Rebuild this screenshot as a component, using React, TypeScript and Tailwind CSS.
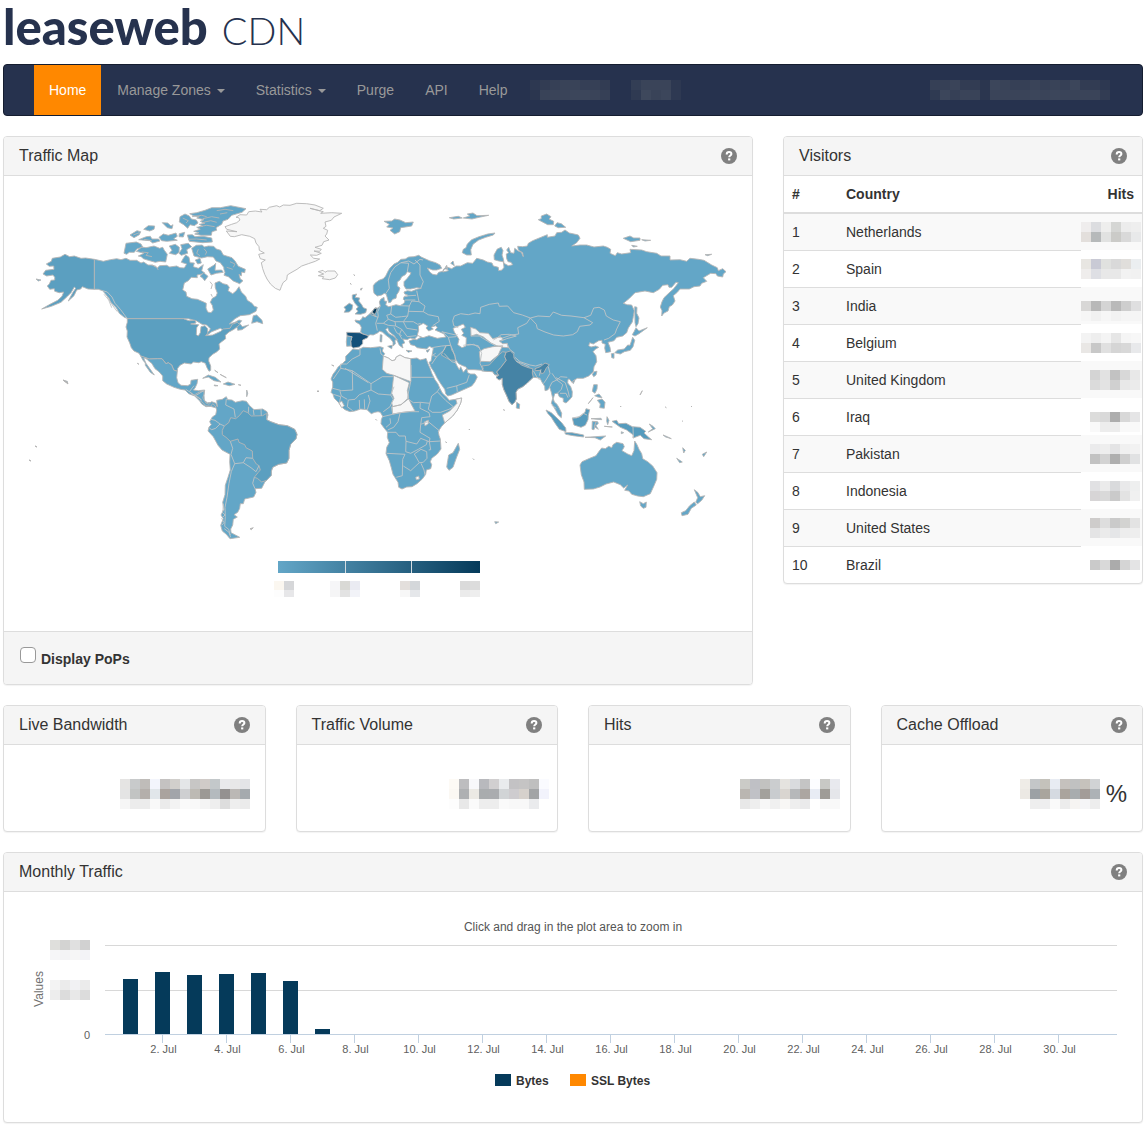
import { useId, type ReactNode } from "react";

type Frame = [number, number];
type Part = [Frame, string];

// The map is traced on a few overlapping sheets, each at three times map scale.
const NORTH_AMERICA: Frame = [20, 190];
const ATLANTIC: Frame = [200, 190];
const AFRICA: Frame = [320, 240];
const SIBERIA: Frame = [440, 190];
const PACIFIC: Frame = [480, 330];
const SOUTH_AMERICA: Frame = [190, 380];

function points(frame: Frame, list: string) {
  const n = list.trim().split(/[\s,]+/).map(Number);
  const out: string[] = [];
  for (let i = 0; i + 1 < n.length; i += 2) {
    out.push(
      `${(frame[0] + n[i] / 3).toFixed(1)} ${(frame[1] + n[i + 1] / 3).toFixed(1)}`
    );
  }
  return out.join("L");
}

function outline(...parts: Part[]) {
  return `M${parts.map(([frame, list]) => points(frame, list)).join("L")}Z`;
}

// Several shapes or lines on one sheet, separated by a slash.
function many(frame: Frame, lists: string, closed = true) {
  return lists
    .split("/")
    .map((list) => `M${points(frame, list)}${closed ? "Z" : ""}`)
    .join("");
}

const LAND = "#63a6c7";
const LAND_USED = "#5b9fc0";
const NO_DATA = "#f7f7f7";
const SEA = "#ffffff";

const eurasia = outline(
  [
    AFRICA,
    "143 287 128 281 122 276 124 262 119 253 107 246 105 240 118 242 125 237 128 230 135 233 145 225 155 216 165 203 172 205 181 198 178 186 182 178 192 172 193 183 200 184 197 195 206 200 215 198 228 194 240 197 252 190 255 182 250 178 252 170 262 169 262 164 254 162 252 156 262 152 275 154 290 148 304 145 290 143 272 147 258 147 252 137 252 125 262 115 270 104 273 98 262 95 256 104 245 110 240 120 232 126 232 138 240 144 236 155 230 164 228 175 218 178 212 187 206 188 203 178 199 163 193 160 185 165 172 168 162 160 160 148 160 137 165 130 177 121 190 116 197 108 205 92 210 84 222 72 233 67 243 58 256 57 266 51 282 50 296 46 305 52 312 55 328 62 347 68 360 75 365 85 350 90 338 90 322 84 330 97 338 103 350 105 356 97 368 94 372 86 382 88 380 76",
  ],
  [
    SIBERIA,
    "8 246 25 242 18 230 35 236 48 228 62 228 82 218 98 220 110 205 130 210 142 216 156 219 160 228 175 232 176 242 186 240 192 232 190 215 176 213 163 209 162 195 168 184 172 177 184 172 189 182 186 195 190 206 192 220 205 227 218 224 213 217 204 215 200 206 199 192 206 188 200 180 206 172 212 188 222 190 224 175 233 182 244 187 250 200 248 188 235 180 233 169 248 170 262 168 265 160 278 152 300 143 322 134 322 142 345 138 350 128 365 127 375 120 388 129 402 132 415 135 420 145 410 158 395 168 420 165 440 165 462 171 490 168 502 172 512 178 510 190 526 197 532 188 545 192 572 188 570 178 605 180 620 185 650 190 663 198 690 198 690 210 720 209 740 214 750 205 775 208 792 211 815 225 832 233 835 242 848 236 858 245 850 252 848 261 832 258 828 251 812 250 790 263 800 274 785 280 780 288 762 290 748 297 720 297 712 307 700 317 705 333 697 345 688 350 684 363 672 369 665 378 666 362 661 351 666 335 672 323 690 306 701 296 715 278 708 277 695 292 687 292 684 284 668 286 658 298 640 308 615 303 585 308 567 326 550 340 562 344 575 345 583 362 580 380 577 396 565 414 560 428 548 438 530 442 522 452 504 457 510 472 512 485 497 488 494 474 496 463 486 459 486 451 476 452 460 462 449 458 446 467 453 471 467 468 476 472 466 478 459 485 468 497 470 515 462 530 460 545 446 558 430 565 412 565 400 572 397 578 388 567",
  ],
  [
    PACIFIC,
    "264 148 263 159 272 170 277 185 276 200 268 210 258 219 250 215 250 205 238 200 233 189 224 191 220 206 223 216 231 223 238 235 245 250 244 263 235 255 227 241 219 227 214 220 218 205 214 187 209 172 203 180 195 182 194 169 187 158 180 145 172 143 160 142 151 150 141 160 128 170 113 178 108 187 109 207 104 217 96 224 87 214 80 197 71 178 67 163 67 145 57 150 48 142 56 136 44 134 38 125 15 123",
  ],
  [
    AFRICA,
    "485 391 463 389 443 389 437 380 428 377 416 371 407 359 405 366 412 379 418 389 422 380 430 397 440 385 443 398 452 402 465 402 472 411 464 427 455 438 435 447 415 456 395 465 383 468 377 461 374 448 362 431 352 415 343 397 333 382 327 367 333 364 336 347 340 325 328 319 320 327 303 325 291 323 285 317 272 314 267 303 281 298 290 299 304 291 295 285 284 297 270 294 262 299 249 297 254 309 246 313 249 324 238 316 232 303 224 288 208 275 203 263 197 269 207 281 220 288 233 299 225 300 226 312 219 318 219 306 210 295 198 286 188 277 179 273 174 278 160 285 151 284",
  ]
);

const africa = outline([
  AFRICA,
  "98 327 115 329 130 322 152 323 180 320 190 323 187 333 194 341 190 348 205 354 216 362 225 360 229 351 240 345 255 353 272 356 291 354 300 360 313 357 318 355 324 371 330 385 336 401 344 418 354 432 359 444 367 459 382 473 387 481 407 478 425 474 422 489 412 510 398 528 374 549 365 559 355 574 357 586 361 597 362 612 363 627 352 642 335 655 331 665 335 674 332 686 319 690 317 703 307 717 291 731 276 740 260 741 246 747 236 742 234 727 219 703 214 683 208 662 198 641 200 622 208 608 202 592 203 577 193 565 183 551 184 539 188 529 181 517 174 515 164 517 154 521 141 509 122 507 104 513 90 515 75 509 65 501 57 489 43 475 39 463 33 457 38 441 38 426 33 417 39 403 47 392 55 380 66 372 77 361 77 349 87 339",
]);

const namerica = outline([
  NORTH_AMERICA,
  "223 208 250 214 271 209 290 206 303 209 318 205 330 211 350 211 363 219 371 216 384 225 398 225 412 234 419 227 440 226 449 231 470 228 480 233 493 234 500 222 484 217 488 208 497 195 507 202 510 218 523 219 520 230 535 235 550 224 545 242 554 249 543 253 531 255 532 263 514 262 505 272 493 279 488 300 498 306 500 319 516 326 532 328 549 335 559 340 558 354 563 366 573 368 580 360 577 346 571 337 577 325 588 319 592 309 586 293 585 279 598 274 609 281 622 284 628 292 624 302 638 311 648 303 657 290 664 306 677 319 682 331 696 340 703 349 712 352 708 364 688 374 661 377 645 386 628 402 645 397 657 390 665 392 659 400 667 410 686 405 666 419 653 421 651 412 637 414 631 423 618 426 601 415 575 425 558 438 555 432 568 423 571 416 560 405 546 403 530 393 505 386 325 386 313 382 298 370 289 353 272 337 267 325 248 302 235 298 223 298",
]);

const usa = outline([
  NORTH_AMERICA,
  "322 386 490 386 507 392 525 391 528 399 512 402 536 404 530 413 529 434 535 438 541 428 543 410 555 407 563 416 563 429 557 437 578 435 602 424 610 417 630 415 637 403 652 397 659 404 642 418 627 426 616 436 617 446 604 456 597 462 599 477 591 485 578 493 567 503 566 513 572 528 572 541 567 544 561 533 556 520 544 515 536 518 520 516 514 522 493 519 480 526 473 535 472 544 461 540 455 525 445 518 438 521 426 506 413 506 388 507 362 498 357 490 342 483 334 473 329 459 321 441 322 423 318 411 322 397",
]);

const alaska = outline([
  NORTH_AMERICA,
  "223 208 197 204 183 205 163 198 149 200 135 193 121 201 97 205 94 214 79 222 88 229 101 228 102 238 77 241 69 252 80 258 99 255 104 262 104 270 93 271 88 282 82 288 89 298 103 296 104 304 118 308 131 306 126 319 113 331 90 343 65 357 94 349 123 337 141 320 153 308 163 291 167 295 158 308 145 333 162 317 170 300 182 297 187 290 204 297 223 298",
]);

const mexico = outline([
  NORTH_AMERICA,
  "362 498 388 507 413 506 426 506 438 521 445 518 455 525 461 540 472 544 470 563 474 578 483 586 503 587 512 582 513 571 533 568 531 581 525 594 520 600 535 602 554 600 552 615 553 631 562 638 577 637 590 645 586 653 571 649 558 650 545 642 540 634 524 618 506 611 495 600 481 598 462 592 440 582 428 572 428 558 417 545 405 536 395 520 385 512 378 504 371 505 378 520 388 534 403 555 391 547 382 534 376 526 376 519 369 511",
]);

const arctic = many(
  NORTH_AMERICA,
  "312 190 318 160 349 156 363 162 368 171 350 177 343 187 328 187 320 193/349 184 365 171 378 173 402 168 419 175 428 172 433 181 442 193 437 216 420 214 406 217 385 211 370 206 364 200 355 198 372 190/330 135 351 122 362 125 358 134 342 143/356 149 379 140 391 139 396 147 416 147 420 153 398 159 389 152/371 118 385 107 404 108 402 118 389 123/417 142 430 132 445 136 468 129 472 139 461 146 472 151 440 154 425 152/427 98 443 99 453 108 459 104 456 116 442 113/448 168 466 163 478 172 477 187 467 194 448 190 456 181/482 164 505 160 515 170 500 179 503 190 484 196 477 190 486 176/480 80 495 72 508 78 514 87 529 90 534 99 523 107 510 104 503 115 491 104 478 96/509 71 530 68 555 61 575 53 601 53 632 47 678 56 666 67 635 76 624 88 609 93 605 103 588 113 590 121 576 125 574 136 543 136 524 132 537 128 521 124 541 118 530 112 548 109 538 103 555 100 541 94 552 89 530 84 538 80 520 77/502 135 517 134 525 140 550 139 575 144 577 156 548 158 508 154/478 131 494 127 490 141 477 140/515 175 529 166 547 165 553 171 565 168 581 169 589 177 602 181 610 195 636 203 645 213 655 229 676 238 674 248 665 246 664 258 657 253 661 267 669 272 659 281 640 273 625 260 612 256 615 247 612 239 611 232 601 218 588 213 580 201 562 200 545 204 522 198/526 210 540 205 544 219 533 222/563 237 581 226 587 220 585 241 605 240 610 247 589 250 573 255/540 259 551 248 564 259 554 272 547 263/700 377 710 375 726 391 728 401 711 395 695 400/130 571 142 574 143 580/48 267 63 270 55 273/380 508 377 503 383 500"
);

// Fjords and straits cut into the islands and the north coast.
const inlets = many(
  NORTH_AMERICA,
  "516 80 545 76 560 80/548 86 575 80 598 84/545 98 572 92 590 97/538 110 560 106 584 110/590 62 615 58 640 62/600 72 622 68/505 148 530 147 560 150/365 186 385 188 378 196 396 200/535 178 530 190 540 197/552 176 560 186 556 194/395 226 408 229 415 240/340 135 358 128/372 148 395 152/488 84 505 92 498 99/630 215 645 222 640 232/620 232 638 238/570 275 577 284 573 297/573 312 577 320",
  false
);

const caribbean = many(
  NORTH_AMERICA,
  "548 565 565 555 586 562 603 576 582 572 565 561/610 582 624 576 645 583 628 587/582 585 594 587 584 588/584 541 594 548/600 553 619 563/655 584 663 586/680 600 683 610 680 620/352 520 357 523"
);

const samerica = outline([
  SOUTH_AMERICA,
  "0 36 12 45 30 35 42 33 42 42 38 54 48 69 57 73 65 65 78 70 82 80 80 61 97 58 109 50 113 59 126 60 136 67 157 62 169 64 179 77 192 89 218 87 231 95 234 105 230 119 242 125 267 134 292 137 314 148 321 163 318 176 302 193 297 211 297 235 290 249 266 253 248 262 244 274 244 286 224 307 215 325 195 326 198 337 191 351 164 357 160 371 151 371 149 385 143 397 132 404 142 411 130 418 128 435 122 447 123 458 149 472 120 476 109 463 97 453 92 436 100 416 93 405 102 388 98 367 105 344 106 316 114 292 121 270 119 246 120 223 96 210 84 196 70 170 54 153 57 141 64 134 59 125 67 111 77 104 80 90 76 78 68 71 62 79 48 77 35 65 28 53 10 45",
]);

const brazil = outline([
  SOUTH_AMERICA,
  "103 138 116 128 122 113 137 116 148 107 160 92 173 98 184 108 218 107 230 100 230 119 242 125 267 134 292 137 314 148 321 163 318 176 302 193 297 211 297 235 290 249 266 253 248 262 244 274 244 286 230 301 215 306 202 295 193 292 205 277 211 270 207 257 199 252 188 235 187 213 168 203 164 194 147 187 144 177 121 184 108 172 97 164 97 151",
]);

const southLines = many(
  SOUTH_AMERICA,
  "62 118 75 121 90 132 103 138/90 132 77 145 65 149 58 144/109 57 107 75 132 87 136 112/176 80 175 98/190 90 192 105/213 87 214 107/121 184 128 205 123 223 134 251 160 248 168 233 188 235/160 248 183 263 198 275 207 257/134 251 124 275 117 310 111 352 105 382 106 410 104 439 116 448 121 465/193 292 188 310 195 326/103 446 117 457 122 472/100 371 99 388 97 397 105 405 95 415 102 428 95 436",
  false
);

const greenland = outline([
  ATLANTIC,
  "75 110 95 103 110 98 120 90 116 83 108 82 120 74 140 75 146 65 166 63 186 66 180 58 200 59 208 52 230 47 239 51 250 45 270 46 290 40 320 41 345 45 370 55 359 62 330 55 370 65 362 70 395 68 425 70 402 81 394 91 375 96 378 109 370 115 383 121 380 132 375 138 387 150 371 155 366 166 345 172 364 178 359 184 342 183 364 190 350 196 331 195 341 205 359 207 346 214 325 221 305 228 291 238 273 248 262 255 260 269 249 278 244 290 240 301 226 295 212 283 201 267 194 253 188 236 184 218 196 210 181 206 176 193 193 189 178 181 177 170 168 159 164 146 149 139 125 134 103 140 91 139 79 123 111 125 80 118",
]);

const iceland = outline([
  ATLANTIC,
  "355 245 369 241 375 247 382 243 405 243 413 254 406 264 389 269 367 266 371 260 355 257 371 252",
]);

const britain = many(
  AFRICA,
  "97 165 110 162 105 172 119 174 116 183 125 194 130 203 140 207 137 218 122 223 105 222 114 214 108 207 115 201 105 190 100 181 97 175/77 198 88 190 98 195 96 208 88 216 73 217 77 208 72 202/121 147 127 144 123 151/90 130 94 133/181 284 186 285 185 306 180 305/203 319 217 316 215 326/258 331 276 333 265 337/318 332 329 328 323 337/101 104 105 107"
);

const islands = many(
  AFRICA,
  "415 610 419 628 409 654 399 682 387 691 380 681 383 662 386 645 399 638/590 487 599 493 598 506 589 504/35 375 42 378/447 567 449 570/459 656 462 659/377 605 380 609/167 538 170 541"
);

const polar = many(
  SIBERIA,
  "80 195 67 188 70 178 78 173 82 162 95 149 117 140 143 132 165 129 160 135 137 142 116 150 99 163 92 179 94 195/28 83 55 79 67 84 41 87/70 84 89 78 82 72 99 69 111 77 146 76 117 82 96 87/304 78 320 72 333 80 327 87 341 94 340 104 323 104 306 95 295 89 304 86/344 108 351 98 364 101 377 112 355 113/550 145 570 138 581 144 600 144 600 151 572 155/605 149 632 151 615 153/575 166 592 169 580 171/795 194 815 193 803 197/584 350 591 352 590 370 597 384 594 401 588 410 585 398/583 424 588 413 597 423 622 413 597 431 585 438 577 434/578 442 584 451 579 470 571 481 553 485 541 492 524 488 533 480 553 477 563 465 570 466/514 491 522 490 522 505 515 503/463 545 471 544 468 555 461 560 457 553/39 213 32 220 43 227/398 573 405 570 400 581"
);

const svalbard = many(
  ATLANTIC,
  "552 94 575 93 584 87 600 90 617 98 640 96 635 108 602 113 599 125 584 132 570 121 579 114 560 111 568 103"
);

const eastIslands = many(
  PACIFIC,
  "341 164 352 164 351 177 345 190 337 184/344 197 357 192 366 203 353 201/352 211 366 207 375 217 373 235 359 233 361 222/325 221 339 203/333 266 363 265 365 269/349 273 343 290 355 298 348 287 355 280 353 275 337 274 336 298 342 299/381 260 387 271 383 284 380 274/373 289 397 291/424 305 431 308 424 311/315 322 345 320 377 318 361 330 345 323/508 282 519 289 526 296 505 306 518 296/549 315 562 320 574 326 557 321/608 353 616 361 611 369/590 385 607 396 599 398/667 373 680 366 671 380/480 195 487 182/556 231 559 233/606 272 608 274/44 575 56 576 47 581/70 239 74 241/421 228 423 231"
);

const australia = many(
  PACIFIC,
  "300 405 306 395 329 385 348 377 358 363 365 354 376 356 386 349 395 353 399 344 410 337 429 341 433 350 426 362 443 372 455 377 462 362 464 333 471 344 477 358 485 371 488 386 503 395 518 408 531 428 530 448 522 467 511 491 490 500 473 498 455 493 447 483 434 481 443 465 431 474 421 464 401 456 378 462 360 471 340 477 313 478 312 456 304 434/479 515 490 521 499 516 498 532 490 535 482 528/643 479 653 487 661 500 674 497 665 511 653 521 647 517 653 503/643 516 649 525 634 535 624 553 606 557 604 548 617 542 629 527"
);

const indonesia = many(
  PACIFIC,
  "198 240 214 248 231 264 245 278 257 294 258 305 238 298 224 278 214 262 203 250/254 308 276 308 311 315 311 321 280 317 257 313/277 264 289 264 302 259 315 247 318 236 329 239 325 256 324 269 316 286 303 292 282 285/396 274 410 271 416 281 438 280 457 290 480 292 497 304 492 309 506 322 515 329 492 326 481 316 459 324 460 315 440 300 421 292"
);

const india = many(
  PACIFIC,
  "78 67 91 63 101 72 102 84 109 94 126 106 145 113 158 116 157 129 160 142 151 150 141 160 128 170 113 178 108 187 109 207 104 217 96 224 87 214 80 197 71 178 67 163 67 145 57 150 48 142 56 136 50 126 63 112 79 91 74 80/165 116 181 110 195 99 208 104 199 114 191 129 184 131 181 121 166 122"
);

const pakistan = outline([
  PACIFIC,
  "6 108 28 105 42 90 55 76 68 65 78 67 74 80 79 91 63 112 50 126 56 136 44 134 38 125 5 123 10 115",
]);

const africaLines = many(
  AFRICA,
  "120 325 120 345 97 357 80 372 62 372 62 385 40 417/62 385 97 392 98 450 65 452 38 445/97 392 153 431 187 410 221 410/75 385 145 428/180 325 183 342 194 350/153 431 153 450 118 464 105 478 85 480 82 500 98 512/153 450 175 462 212 465 222 440/145 465 150 483 142 509/118 480 119 509/133 478 134 508/60 453 64 468 82 478/40 463 62 470 58 490/212 465 220 478 210 500 190 515/215 500 218 523 188 530/218 523 239 518 268 515 297 515/273 375 273 412 340 412/272 425 262 475 280 488 301 487 329 490 335 468 352 455 359 444/329 490 325 508 337 517 362 517 387 508 400 500 378 482 352 455/301 487 300 505 327 518 330 530 305 533 302 553 325 545 360 574/240 520 234 545 221 562 203 570/210 535 212 550 198 562/203 577 228 577 237 588 256 588 258 604 290 612 302 595 328 605 330 595 300 577 302 553/258 604 257 635 272 640 295 628 319 614 322 603/200 640 255 643 248 658 247 707 229 712/250 678 272 692 298 668 283 642/283 642 303 628 320 635 321 655 310 667 298 668/303 670 312 690 315 705/328 605 332 629 326 630/328 605 362 603",
  false
);

const europeLines = many(
  AFRICA,
  "197 161 208 145 205 120 212 98 225 80 243 68 266 70 262 95/243 68 266 63 282 72 300 58 309 60/285 60 300 75 300 105 310 125 302 145/181 198 173 215 175 228 167 250 172 272/215 198 212 222 227 232 245 230 263 228 268 198 240 197/268 198 275 183 297 185 315 198 310 215 265 214/297 185 290 152/255 180 286 180/254 168 288 166/310 215 325 224 355 230 358 244 338 257/263 228 250 245 225 245 205 238 200 226 212 222/205 238 190 250 170 250/225 245 227 258 205 256 190 250/250 245 260 265 292 270/227 258 245 268 262 290 289 287/245 268 238 284 247 298/222 262 230 278 245 287/155 217 163 228 175 232/250 245 280 245 293 253 302 250/335 323 365 318 392 316 385 292 367 275/385 292 408 290 412 283/365 275 390 281 408 285/340 347 350 350 372 330 378 317/350 350 335 372/372 340 395 365 410 369/392 316 398 330 405 350 408 361/380 445 408 438 440 427 448 404/410 438 412 455/335 347 347 340/430 316 450 313 475 317 485 340 480 370 490 392",
  false
);

const asiaLines = many(
  SIBERIA,
  "38 392 43 378 62 371 85 374 105 369 120 371 122 352 148 343 175 339 178 349 203 348 221 368 247 375 271 384 260 400 233 413 236 432 214 435 188 444 174 442 160 450/55 413 41 407 38 392/271 384 294 378 329 380 340 366 365 376 393 378 432 383 458 398 450 405 419 409 412 425 398 434 370 438 341 435 315 426 292 416 289 403 271 384/432 383 452 376 461 354 477 352 493 360 499 378 520 390 541 395 530 417 525 431 506 445 492 450/174 442 183 434 208 433 229 438 200 446 183 453/92 438 118 438 150 458 166 467/82 466 101 463 120 475/200 460 209 478 224 490/225 502 240 515 270 525 287 528 306 522/303 538 298 557/325 530 330 550 318 570 310 581/336 550 350 570 362 560 382 562",
  false
);

const indochinaLines = many(
  PACIFIC,
  "208 173 216 157 230 150 240 157 248 164 244 178 233 189/228 143 240 149 256 158 265 186 268 200/240 190 258 190 264 203/160 122 170 140 179 150/109 94 130 102 148 110/215 226 229 235/277 264 297 260 310 250 321 255/459 290 460 325",
  false
);

function WorldMap() {
  const ramp = useId();
  const ticks = [
    { x: 274, cells: ["#fbf7f0", "#d6d7d9"], below: ["#fdfdfd", "#e7e7e9"] },
    { x: 330, cells: ["#f6f6f8", "#d9d9d5", "#eaebf2"], below: ["#f5f5f6", "#e3e3e3", "#f2f3f8"] },
    { x: 400, cells: ["#e3dfdc", "#d4d7da"], below: ["#f7f7f7", "#e5e7ea"] },
    { x: 460, cells: ["#dadada", "#dcdcdc"], below: ["#ebebeb", "#eeeeee"] },
  ];
  return (
    <svg
      viewBox="4 176 748 455"
      className="block w-full"
      role="img"
      aria-label="Traffic by country"
    >
      <defs>
        <linearGradient id={ramp}>
          <stop offset="0" stopColor={LAND} />
          <stop offset="1" stopColor="#053a5a" />
        </linearGradient>
      </defs>
      <g stroke="#b5b5b5" strokeWidth="0.9" strokeLinejoin="round" fill={LAND}>
        <path d={namerica} />
        <path d={arctic} />
        <path d={inlets} fill="none" />
        <path d={usa} fill={LAND_USED} />
        <path d={alaska} fill={LAND_USED} />
        <path d={mexico} />
        <path d={caribbean} />
        <path d={samerica} />
        <path d={brazil} fill={LAND_USED} />
        <path d={many(SOUTH_AMERICA, "180 446 190 443 184 449")} fill="#aaaaaa" />
        <path d={greenland} fill={NO_DATA} />
        <path d={iceland} fill={NO_DATA} />
        <path d={britain} fill="#5499bb" />
        <path d={eurasia} />
        <path d={africa} />
        <path d={islands} />
        <path d={polar} />
        <path d={svalbard} />
        <path d={eastIslands} />
        <path d={australia} />
        <path d={indonesia} fill="#559bbd" />
        <path d={pakistan} fill="#579cbd" />
        <path d={india} fill="#4583a5" />
        <path d={many(AFRICA, "378 317 392 316 395 330 405 345 406 361 390 360 364 345")} fill="#549aba" />
        <path
          d={many(
            AFRICA,
            "190 348 205 354 216 362 225 360 229 351 240 345 255 353 272 356 273 425 221 406 200 400 187 388/221 406 268 428 262 452 266 473 243 494 218 500 215 488 222 475 215 460/216 500 243 494 266 476 275 495 285 513 255 516 218 522/407 478 425 474 422 489 412 510 398 528 374 549 367 525 389 513 411 490/57 489 65 483 73 497 65 503/313 546 325 540 325 551 315 558/287 712 296 708 298 717 289 719"
          )}
          fill={NO_DATA}
        />
        <path
          d={many(
            SIBERIA,
            "92 412 107 417 120 428 145 430 158 446 182 440 190 448 178 453 188 461 202 460 205 473 190 472 170 467 153 459 129 440 110 433 93 438/118 485 132 476 158 470 188 467 180 483 175 495 150 515 121 514"
          )}
          fill={NO_DATA}
        />
        <path
          d={many(
            AFRICA,
            "292 286 296 270 295 258 310 250 323 258 318 264 326 273 340 267 333 262 347 257 352 263 345 270 371 281 378 291 352 295 327 287 309 293"
          )}
          fill={SEA}
        />
        <path
          d={many(
            SIBERIA,
            "47 412 70 402 76 412 64 418 71 430 65 436 79 443 78 468 66 473 53 464 57 448 43 426 39 415"
          )}
          fill={SEA}
        />
        <path
          d={many(AFRICA, "80 277 120 278 128 282 145 287 143 293 128 300 128 311 118 321 100 324 93 318 92 304 96 290 81 288")}
          fill="#145079"
        />
        <path d={many(AFRICA, "81 288 96 290 92 304 93 318 80 319 79 305")} />
        <path d={many(AFRICA, "156 217 163 206 172 204 168 217 164 224")} fill="#053a5a" />
        <path d={many(AFRICA, "151 219 162 220 167 229 154 225")} fill="#4384a6" />
      </g>
      <g fill="none" stroke="#c0c4c6" strokeWidth="0.9" strokeLinejoin="round">
        <path d={southLines} />
        <path d={africaLines} />
        <path d={europeLines} />
        <path d={asiaLines} />
        <path d={indochinaLines} />
        <path
          d={many(
            NORTH_AMERICA,
            "248 302 262 306 276 321 285 340 302 359 322 386/252 313 266 330 275 353/497 598 508 605 522 587/508 605 525 618 551 602/527 618 545 630/262 321 277 345 292 365",
            false
          )}
        />
      </g>
      <path
        d="M63 380l4 2 1 2zM35 446l2 1zM29 460l2 1zM317 391l2 0-1 1zM691 406l1 1z"
        fill="#aaaaaa"
        stroke="#b5b5b5"
      />
      <rect x="278" y="561" width="202" height="12" fill={`url(#${ramp})`} />
      <path d="M345.500 561v12M411.500 561v12" stroke="#d5dde2" />
      {ticks.map((tick) => (
        <g key={tick.x} shapeRendering="crispEdges">
          {tick.cells.map((fill, i) => (
            <rect key={i} x={tick.x + i * 10} y="581" width="10" height="9" fill={fill} />
          ))}
          {tick.below.map((fill, i) => (
            <rect key={i} x={tick.x + i * 10} y="590" width="10" height="7" fill={fill} />
          ))}
        </g>
      ))}
    </svg>
  );
}

// Masked value: one string per line, one hex colour per cell, "." for an empty one.
function Masked({ lines }: { lines: string[] }) {
  return (
    <span className="inline-block align-top" aria-label="Hidden">
      {lines.map((line, i) => (
        <span key={i} className="flex">
          {line.split(" ").map((c, j) => (
            <span
              key={j}
              className="block size-[10px] shrink-0"
              style={{ backgroundColor: c === "." ? undefined : `#${c}` }}
            />
          ))}
        </span>
      ))}
    </span>
  );
}

function HelpButton({ topic }: { topic: string }) {
  return (
    <button type="button" aria-label={`Help: ${topic}`} className="size-4">
      <svg viewBox="0 0 16 16" className="block size-4">
        <circle cx="8" cy="8" r="8" fill="#808080" />
        <path
          d="M5.700 6.400C5.700 4.700 6.700 4.100 8.100 4.100C9.500 4.100 10.400 4.900 10.400 6C10.400 7.500 8.200 7.600 8.200 9.300"
          fill="none"
          stroke="#fff"
          strokeWidth="2"
        />
        <rect x="7.100" y="10.400" width="2.200" height="2" fill="#fff" />
      </svg>
    </button>
  );
}

function Panel({ title, children }: { title: string; children: ReactNode }) {
  return (
    <section className="rounded border border-[#dddddd] bg-white shadow-[0_1px_1px_rgba(0,0,0,0.05)] overflow-hidden">
      <header className="flex items-center justify-between h-[39px] px-[15px] border-b border-[#dddddd] bg-[#f5f5f5]">
        <h3 className="text-base leading-4">{title}</h3>
        <HelpButton topic={title} />
      </header>
      {children}
    </section>
  );
}

const menu = [
  { label: "Home", active: true },
  { label: "Manage Zones", caret: true },
  { label: "Statistics", caret: true },
  { label: "Purge" },
  { label: "API" },
  { label: "Help" },
];

const visitors = [
  { country: "Netherlands", hits: ["efeded dcdde0 eeeeed d5d6d4 ececec eeeeee", "e3dfdc b6b9ba e1e2e1 cbcbc8 d9d9d9 e8e9ea"] },
  { country: "Spain", hits: ["e8e6e2 c9cad5 e0e1df d9d9d9 e0dedb ebeef0", "efedec dedfe4 e8e8e8 e8e8e8 f2f2f2 f1f1f1"] },
  { country: "India", hits: [". . . . . .", "d8d7d6 b8b8b8 d4d4d4 b9b9b9 cecece dfdfe0", "f6f6f6 f1f1f1 f6f6f6 f2f2f2 f5f5f5 f5f5f5"] },
  { country: "Belgium", hits: ["f3f3f3 eeeeee f4f4f4 e6e6e6 f5f5f5 f7f7f7", "e9e7e5 c8c8c8 e0e0e0 d5d5d5 d8d8d8 e8e9eb"] },
  { country: "United Kingdom", hits: ["d4d4d4 e2e2e2 c2c2c2 d8d8d8 e8e8e8", "dbdbdb e3e3e3 d0d0d0 e8e8e8 ebebeb"] },
  { country: "Iraq", hits: [". . . . .", "dcdcdb d9d9d9 adadad d8d8d8 e5e5e6", "f9f9f9 ededed ededed f9f9f9 f9f9f9"] },
  { country: "Pakistan", hits: ["ebebec eeeeee e4e4e5 f0f0f0 f2f2f2", "c2c2c2 d3d3d3 afafaf cfcfcf e1e2e3"] },
  { country: "Indonesia", hits: ["e1e1e3 ebebeb d9dadc e9e9ea eeefef", "d7d5d6 d9d9d9 cacaca e3e3e3 f0f0f0"] },
  { country: "United States", hits: ["cecccb dedede cacaca d3d3d1 e3e3e3", "e4e4e5 ebebeb e5e6e8 ededed eeeeee"] },
  { country: "Brazil", hits: [". . . . .", "cacaca d9d9d9 ababab d5d5d5 e4e4e5", ". . . . ."] },
];

const totals = [
  {
    title: "Live Bandwidth",
    pad: "pr-[15px]",
    lines: [
      "e5e4e3 c8cacb bfbcb9 f3f5fc c4c2c1 d1cfcc e4e6e8 c7c6c5 d0cbc8 c3c8ca e9e9eb e8e8e8 e3e4e7",
      "e4e4e4 c2c4c3 b4afab e1e6ea aaa39e a2a5aa cecfd1 bdbab4 9c9995 b4babe 949190 bbb8b5 a5aaae",
      "f6f6f6 ececec ececec f9f9f9 ebebeb f3f3f3 fafafa f9f9f9 f4f4f4 eeeeee dddddd eeeeee ebebeb",
    ],
  },
  {
    title: "Traffic Volume",
    pad: "pr-2",
    lines: [
      "fdfaf5 bdbdbf f8f8fa b8b9bd d1cfd0 e9ebed c3c2c4 c5c4c4 bfbfbf fafbff",
      "fbf8f3 aeb0b2 ebe9e4 a9acae aaacaf d1d4d6 cecccf d6d1cc a2a4a6 f2f3fc",
      "fdfdfd e8e8e8 fafafa ededed ededed fafafa f8f8f8 f8f8f8 eaebed ffffff",
    ],
  },
  {
    title: "Hits",
    pad: "pr-2.5",
    lines: [
      "cbcbc7 bfc0c5 c2c2c0 cbcdcf e5e3df d9dbde c4c4c4 fcfdff c8c8c5 e8e9ee",
      "bab6b1 c0c1c6 a3a19c c9cccf d9d5d0 b6b8ba aca6a1 e8ecf4 9f9c97 e5e6ea",
      "e8e8e8 eeeeee f7f7f7 f0f0f0 f8f7f5 eeeeee eaeaeb . f9f9f9 f9f9f9",
    ],
  },
  {
    title: "Cache Offload",
    pad: "pr-[15px]",
    unit: "%",
    lines: [
      "efece7 c3c6c8 c4c2bb e8ecf3 c5c1bd c0c1c1 c6c2bc d1d3d5",
      "ece9e4 9ca1a5 a9a59d d5dae1 aaa49d a8acae a39c98 adb2b6",
      "ffffff eeeeee eeeeef fafafa ececec f6f4f2 f5f5f7 ededed",
    ],
  },
];

const barTops = [979, 972, 975, 974, 973, 981, 1029];
const tickDays = Array.from({ length: 15 }, (_, i) => (i + 1) * 2);
const dayX = (day: number) => 130.5 + (day - 1) * 32;

const axisMasks = [
  { y: 940, fills: ["#dfdfdc", "#d3d3d2", "#e0e0e0", "#d1d1d1"] },
  { y: 950, fills: ["#f6f6f8", "#f3f3f5", "#f6f6f6", "#f3f3f7"] },
  { y: 980, fills: ["#f3f3f3", "#ebebeb", "#f1f1f3", "#ebebeb"] },
  { y: 990, fills: ["#ededed", "#dcdcdc", "#e8e8e8", "#dcdcdc"] },
];

function MonthlyChart() {
  return (
    <svg
      viewBox="4 892 1138 230"
      className="block w-full font-['Liberation_Sans',Arial,sans-serif]"
      role="img"
      aria-label="Monthly traffic"
    >
      <text x="573" y="931" textAnchor="middle" fontSize="12" fill="#555555">
        Click and drag in the plot area to zoom in
      </text>
      <path d="M105 945.500H1117M105 990.500H1117" stroke="#d8d8d8" />
      {barTops.map((top, i) => (
        <rect
          key={i}
          x={dayX(i + 1) - 7.5}
          y={top}
          width="15"
          height={1034 - top}
          fill="#053a5a"
        />
      ))}
      <path d="M105 1034.500H1117" stroke="#c0d0e0" />
      {tickDays.map((day) => (
        <g key={day}>
          <path d={`M${dayX(day)} 1035v8`} stroke="#c0d0e0" />
          <text x={dayX(day) + 1} y="1053" textAnchor="middle" fontSize="11" fill="#606060">
            {day}. Jul
          </text>
        </g>
      ))}
      {axisMasks.map((row) =>
        row.fills.map((fill, i) => (
          <rect key={`${row.y}-${i}`} x={50 + i * 10} y={row.y} width="10" height="10" fill={fill} />
        ))
      )}
      <text x="90" y="1039" textAnchor="end" fontSize="11" fill="#606060">
        0
      </text>
      <text
        transform="translate(43 989) rotate(-90)"
        textAnchor="middle"
        fontSize="12"
        fill="#707070"
      >
        Values
      </text>
      <g fontSize="12" fontWeight="bold" fill="#333333">
        <rect x="495" y="1074" width="16" height="12" fill="#053a5a" />
        <text x="516" y="1085">Bytes</text>
        <rect x="570" y="1074" width="16" height="12" fill="#ff8800" />
        <text x="591" y="1085">SSL Bytes</text>
      </g>
    </svg>
  );
}

export default function App() {
  return (
    <div className="pl-[3px] pr-1 pb-1 bg-white text-[#333333] text-sm leading-5 font-['Liberation_Sans',Arial,sans-serif]">
      <h1 className="flex items-baseline gap-3.5 h-16 leading-[52px] font-[Lato,sans-serif] text-[#26324e]">
        <span className="text-[49px] font-black">leaseweb</span>
        <span className="text-[38px] font-light">CDN</span>
      </h1>

      <nav className="flex items-center justify-between h-[52px] mb-5 pl-[30px] pr-8 rounded border border-[#151d30] bg-[#26324e]">
        <div className="flex items-center gap-px">
          {menu.map((item) => (
            <a
              key={item.label}
              href="#"
              className={
                item.active
                  ? "flex items-center h-[50px] px-[15px] bg-[#ff8800] text-white"
                  : "flex items-center h-[50px] px-[15px] text-[#999999]"
              }
            >
              {item.label}
              {item.caret && (
                <span className="ml-1.5 mt-0.5 border-x-4 border-t-4 border-x-transparent border-t-[#999999]" />
              )}
            </a>
          ))}
          <a href="#" className="ml-1.5 flex">
            <Masked
              lines={[
                "2d3851 323c53 364056 394358 394358 353f56 364056 323c53",
                "2b364f 394358 3a4459 3a4459 3c465b 3c465b 3a4459 364056",
              ]}
            />
          </a>
          <a href="#" className="ml-5 flex">
            <Masked lines={["333e55 3a4459 3a4459 3a4459 2d3851", "2f3a52 3e485c 394358 3c465b 2e3952"]} />
          </a>
        </div>
        <a href="#" className="flex">
          <Masked
            lines={[
              "364056 364056 3a4459 323c53 323c53 2b364f 3c465b 394358 364056 364056 3a4459 364056 394358 364056 3c465b 323c53 323c53 2d3851",
              "2f3a52 3c465b 364056 3a4459 394358 2b364f 3a4459 3a4459 3a4459 3a4459 3c465b 3a4459 3c465b 3a4459 394358 3a4459 3a4459 323c53",
            ]}
          />
        </a>
      </nav>

      <main className="flex flex-col gap-5">
        <div className="grid grid-cols-[25fr_12fr] items-start gap-[30px]">
          <Panel title="Traffic Map">
            <WorldMap />
            <footer className="px-4 py-[15px] border-t border-[#dddddd] bg-[#f5f5f5]">
              <label className="inline-flex items-end gap-[5px] h-[22px] font-bold">
                <input
                  type="checkbox"
                  className="self-start appearance-none size-4 rounded border border-[#999999] bg-white"
                />
                Display PoPs
              </label>
            </footer>
          </Panel>

          <Panel title="Visitors">
            <table className="w-full table-fixed">
              <thead>
                <tr className="h-[37px] border-b-2 border-[#dddddd]">
                  <th className="w-[54px] px-2 text-left">#</th>
                  <th className="px-2 text-left">Country</th>
                  <th className="w-[61px] px-2 text-right">Hits</th>
                </tr>
              </thead>
              <tbody>
                {visitors.map((row, i) => (
                  <tr key={row.country} className="group h-[37px] odd:bg-[#f9f9f9]">
                    <td className="px-2 border-t border-[#dddddd] group-first:border-t-0">
                      {i + 1}
                    </td>
                    <td className="px-2 border-t border-[#dddddd] group-first:border-t-0">
                      {row.country}
                    </td>
                    <td className="pr-0.5 text-right">
                      <Masked lines={row.hits} />
                    </td>
                  </tr>
                ))}
              </tbody>
            </table>
          </Panel>
        </div>

        <div className="grid grid-cols-4 gap-[30px]">
          {totals.map((total) => (
            <Panel key={total.title} title={total.title}>
              <div
                className={`flex items-center justify-end gap-1.5 h-[86px] pt-3 text-2xl ${total.pad}`}
              >
                <Masked lines={total.lines} />
                {total.unit}
              </div>
            </Panel>
          ))}
        </div>

        <Panel title="Monthly Traffic">
          <MonthlyChart />
        </Panel>
      </main>
    </div>
  );
}
